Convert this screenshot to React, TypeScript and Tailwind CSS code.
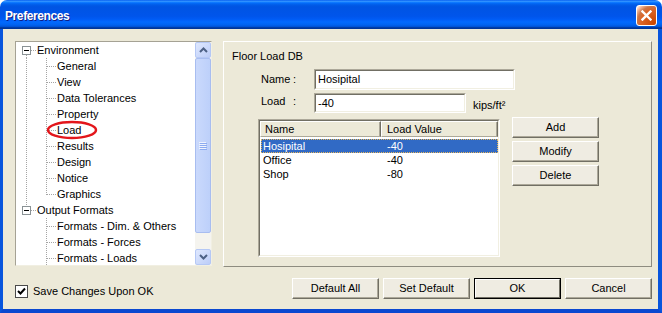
import React from "react";

const DOT = "#a5a5a5";

function RootGlyph({ below, above }: { below?: boolean; above?: boolean }) {
  return (
    <svg width="21" height="16" className="shrink-0" shapeRendering="crispEdges">
      {above && <line x1="10.5" y1="0" x2="10.5" y2="4" stroke={DOT} strokeDasharray="1 1" />}
      {below && <line x1="10.5" y1="13" x2="10.5" y2="16" stroke={DOT} strokeDasharray="1 1" />}
      <line x1="15" y1="8.5" x2="21" y2="8.5" stroke={DOT} strokeDasharray="1 1" />
      <rect x="6.5" y="4.5" width="8" height="8" fill="white" stroke="#8a9295" />
      <line x1="8" y1="8.5" x2="13" y2="8.5" stroke="#000" />
    </svg>
  );
}

function ChildGlyph({ rootLine, last }: { rootLine?: boolean; last?: boolean }) {
  return (
    <svg width="41" height="16" className="shrink-0" shapeRendering="crispEdges">
      {rootLine && <line x1="10.5" y1="0" x2="10.5" y2="16" stroke={DOT} strokeDasharray="1 1" />}
      <line x1="30.5" y1="0" x2="30.5" y2={last ? 9 : 16} stroke={DOT} strokeDasharray="1 1" />
      <line x1="31" y1="8.5" x2="40" y2="8.5" stroke={DOT} strokeDasharray="1 1" />
    </svg>
  );
}

type Row = { t: string; kind: "root" | "child"; rootLine?: boolean; last?: boolean; below?: boolean; above?: boolean };

const rows: Row[] = [
  { t: "Environment", kind: "root", below: true },
  { t: "General", kind: "child", rootLine: true },
  { t: "View", kind: "child", rootLine: true },
  { t: "Data Tolerances", kind: "child", rootLine: true },
  { t: "Property", kind: "child", rootLine: true },
  { t: "Load", kind: "child", rootLine: true },
  { t: "Results", kind: "child", rootLine: true },
  { t: "Design", kind: "child", rootLine: true },
  { t: "Notice", kind: "child", rootLine: true },
  { t: "Graphics", kind: "child", rootLine: true, last: true },
  { t: "Output Formats", kind: "root", above: true },
  { t: "Formats - Dim. & Others", kind: "child" },
  { t: "Formats - Forces", kind: "child" },
  { t: "Formats - Loads", kind: "child" },
];

function Chevron({ up }: { up?: boolean }) {
  return (
    <svg width="9" height="6" viewBox="0 0 9 6">
      <path
        d={up ? "M1 5 L4.5 1.5 L8 5" : "M1 1 L4.5 4.5 L8 1"}
        fill="none"
        stroke="#4d6185"
        strokeWidth="2"
      />
    </svg>
  );
}

function ScrollBar() {
  return (
    <div className="w-[16px] h-full flex flex-col bg-[#f5f4ef] shrink-0">
      <div className="h-[16px] rounded-[2px] border border-[#b5c8f5] bg-[linear-gradient(135deg,#dfe8fe,#bccdf8)] flex items-center justify-center">
        <Chevron up />
      </div>
      <div className="h-[175px] rounded-[2px] border border-[#a8bdf0] bg-[linear-gradient(90deg,#cad9fc,#bdd0fa)] flex items-center justify-center">
        <svg width="8" height="8" shapeRendering="crispEdges">
          <line x1="0" y1="0.5" x2="7" y2="0.5" stroke="#eef3fe" />
          <line x1="1" y1="1.5" x2="8" y2="1.5" stroke="#8cabf0" />
          <line x1="0" y1="2.5" x2="7" y2="2.5" stroke="#eef3fe" />
          <line x1="1" y1="3.5" x2="8" y2="3.5" stroke="#8cabf0" />
          <line x1="0" y1="4.5" x2="7" y2="4.5" stroke="#eef3fe" />
          <line x1="1" y1="5.5" x2="8" y2="5.5" stroke="#8cabf0" />
          <line x1="0" y1="6.5" x2="7" y2="6.5" stroke="#eef3fe" />
          <line x1="1" y1="7.5" x2="8" y2="7.5" stroke="#8cabf0" />
        </svg>
      </div>
      <div className="flex-1" />
      <div className="h-[16px] rounded-[2px] border border-[#b5c8f5] bg-[linear-gradient(135deg,#dfe8fe,#bccdf8)] flex items-center justify-center">
        <Chevron />
      </div>
    </div>
  );
}

function Tree() {
  return (
    <div className="w-[197px] h-[225px] bg-white border border-t-[#a5a294] border-l-[#a5a294] border-r-[#f1efe2] border-b-[#f1efe2] flex overflow-hidden shrink-0">
      <div className="flex-1 flex flex-col overflow-hidden">
        {rows.map((r) => (
          <div key={r.t} className="relative h-[16px] flex items-center shrink-0 whitespace-nowrap">
            {r.kind === "root" ? (
              <RootGlyph below={r.below} above={r.above} />
            ) : (
              <ChildGlyph rootLine={r.rootLine} last={r.last} />
            )}
            <span>{r.t}</span>
            {r.t === "Load" && (
              <svg
                width="52"
                height="20"
                className="absolute left-[30px] top-[-2px] pointer-events-none"
              >
                <ellipse cx="26" cy="10" rx="24" ry="8" fill="none" stroke="#e3161b" strokeWidth="2.5" />
              </svg>
            )}
          </div>
        ))}
      </div>
      <ScrollBar />
    </div>
  );
}

function Sunken({ className, children }: { className?: string; children?: React.ReactNode }) {
  return (
    <div
      className={
        "bg-white border border-t-[#aca899] border-l-[#aca899] border-r-white border-b-white " +
        (className ?? "")
      }
    >
      <div className="w-full h-full border border-t-[#716f64] border-l-[#716f64] border-r-[#f1efe2] border-b-[#f1efe2] overflow-hidden">
        {children}
      </div>
    </div>
  );
}

function Btn({ label, w = "w-[87px]" }: { label: string; w?: string }) {
  return (
    <div
      className={
        w +
        " h-[21px] bg-[#efece2] border border-t-white border-l-white border-r-[#716f64] border-b-[#716f64] shadow-[inset_-1px_-1px_0_#aca899] flex items-center justify-center"
      }
    >
      {label}
    </div>
  );
}

function OkBtn() {
  return (
    <div className="w-[87px] h-[21px] border border-black">
      <div className="w-full h-full bg-[#efece2] border border-t-white border-l-white border-r-[#716f64] border-b-[#716f64] flex items-center justify-center">
        OK
      </div>
    </div>
  );
}

function ListView() {
  const data = [
    ["Hosipital", "-40"],
    ["Office", "-40"],
    ["Shop", "-80"],
  ];
  return (
    <Sunken className="w-[242px] h-[138px] mt-[2px] shrink-0">
      <div className="flex h-[16px]">
        <div className="w-[121px] h-full bg-[#ece9d8] border border-t-white border-l-white border-r-[#716f64] border-b-[#aca899] shadow-[inset_-1px_0_0_#aca899] pl-[4px] flex items-center">
          Name
        </div>
        <div className="w-[117px] h-full bg-[#ece9d8] border border-t-white border-l-white border-r-[#716f64] border-b-[#aca899] shadow-[inset_-1px_0_0_#aca899] pl-[5px] flex items-center">
          Load Value
        </div>
      </div>
      <div className="flex flex-col pt-[2px] pl-[1px]">
        {data.map(([n, v], i) => (
          <div
            key={n}
            className={
              "h-[14px] flex items-center " +
              (i === 0
                ? "bg-[#316ac5] text-white border border-dotted border-[#e6b65a]"
                : "border border-transparent")
            }
          >
            <span className="w-[125px] pl-[1px] shrink-0">{n}</span>
            <span>{v}</span>
          </div>
        ))}
      </div>
    </Sunken>
  );
}

function Panel() {
  return (
    <div className="w-[429px] h-[226px] border border-t-white border-l-white border-r-[#8e8c80] border-b-[#8e8c80] pl-[8px] pt-[8px] flex flex-col shrink-0">
      <div className="h-[13px]">Floor Load DB</div>
      <div className="flex items-center mt-[6px] ml-[29px] h-[21px]">
        <span className="w-[31px]">Name</span>
        <span className="w-[22px] pl-[1px]">:</span>
        <Sunken className="w-[201px] h-[21px]">
          <div className="pl-[2px] h-full flex items-center">Hosipital</div>
        </Sunken>
      </div>
      <div className="flex items-start mt-[3px] ml-[29px] h-[20px]">
        <span className="w-[31px] mt-[2px]">Load</span>
        <span className="w-[22px] pl-[1px] mt-[2px]">:</span>
        <Sunken className="w-[152px] h-[20px]">
          <div className="pl-[2px] h-full flex items-center">-40</div>
        </Sunken>
        <span className="ml-[7px] mt-[6px]">kips/ft²</span>
      </div>
      <div className="flex items-start mt-[4px] ml-[26px]">
        <ListView />
        <div className="ml-[12px] flex flex-col gap-[3px]">
          <Btn label="Add" />
          <Btn label="Modify" />
          <Btn label="Delete" />
        </div>
      </div>
    </div>
  );
}

export default function App() {
  return (
    <div className="w-[662px] h-[313px] flex flex-col font-['Liberation_Sans',Arial,sans-serif] text-[11px] leading-[13px] text-black bg-white">
      <div className="h-[29px] shrink-0 flex items-center rounded-t-[7px] pl-[5px] pr-[5px] bg-[linear-gradient(180deg,#0058ee_0%,#3593ff_4%,#288eff_6%,#127dff_8%,#036ffc_10%,#0262ee_14%,#0057e5_20%,#0054e3_24%,#0055eb_56%,#005bf5_66%,#026afe_76%,#0062ef_86%,#0052d6_92%,#0040ab_94%,#003092_100%)]">
        <span className="text-white font-bold text-[12px] leading-[16px] tracking-[-0.4px] mt-[3px] font-['Liberation_Sans',Arial,sans-serif] [text-shadow:1px_1px_0_#0f1d86]">
          Preferences
        </span>
        <div className="ml-auto mt-[2px] w-[21px] h-[21px] rounded-[3px] border border-white bg-[radial-gradient(circle_at_90%_90%,#cc4600_0%,#dc6527_55%,#cd7546_70%,#ffccb2_90%,#ffffff_100%)] flex items-center justify-center">
          <svg width="11" height="11" viewBox="0 0 11 11">
            <path d="M1.5 1.5 L9.5 9.5 M9.5 1.5 L1.5 9.5" stroke="white" strokeWidth="2.4" strokeLinecap="square" />
          </svg>
        </div>
      </div>
      <div className="flex-1 bg-[#ece9d8] border-l-[3px] border-r-[4px] border-b-[4px] border-l-[#0855dd] border-r-[#0855dd] border-b-[#0a48d0] pl-[12px] pr-[6px] pt-[12px] flex flex-col">
        <div className="flex items-start gap-[11px]">
          <Tree />
          <Panel />
        </div>
        <div className="flex items-start mt-[11px]">
          <div className="mt-[7px] flex items-center">
            <div className="w-[13px] h-[13px] bg-white border border-[#4a4a4a] flex items-center justify-center">
              <svg width="9" height="9" viewBox="0 0 9 9">
                <path d="M1 4 L3.5 6.5 L8 1.5" fill="none" stroke="#000" strokeWidth="2" />
              </svg>
            </div>
            <span className="ml-[5px]">Save Changes Upon OK</span>
          </div>
          <div className="ml-auto flex gap-[4px]">
            <Btn label="Default All" />
            <Btn label="Set Default" />
            <OkBtn />
            <Btn label="Cancel" />
          </div>
        </div>
      </div>
    </div>
  );
}
